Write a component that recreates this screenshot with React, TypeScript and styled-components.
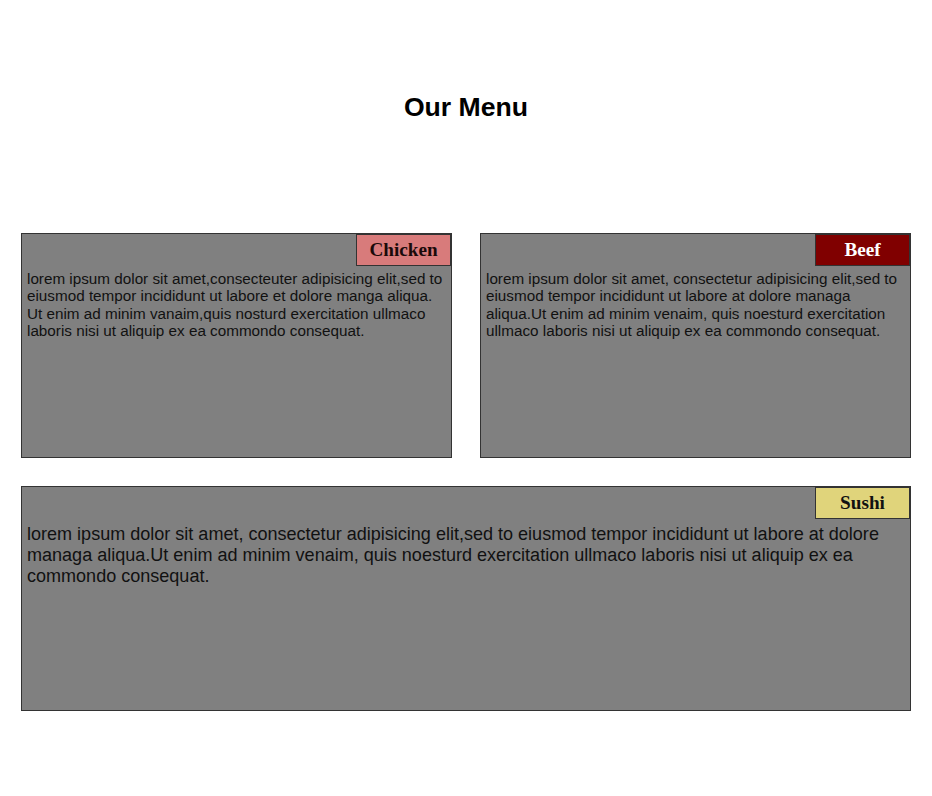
import React from "react";
import styled, { createGlobalStyle } from "styled-components";

const GlobalStyle = createGlobalStyle`
  html, body {
    margin: 0;
    padding: 0;
    background: #ffffff;
  }
  body {
    font-family: "Liberation Sans", Arial, sans-serif;
    color: #000;
  }
  * { box-sizing: border-box; }
`;

const Page = styled.main`
  padding: 92px 21px 0 21px;
  width: 932px;
`;

const Title = styled.h1`
  margin: 0;
  text-align: center;
  font-family: "Liberation Sans", Arial, sans-serif;
  font-weight: bold;
  font-size: 26.6px;
  line-height: 31px;
`;

const Grid = styled.section`
  margin-top: 110px;
  display: grid;
  grid-template-columns: 431px 431px;
  column-gap: 28px;
  row-gap: 28px;
`;

const Card = styled.article<{ $wide?: boolean }>`
  grid-column: ${(p) => (p.$wide ? "1 / span 2" : "auto")};
  height: 225px;
  background: #808080;
  border: 1px solid #333333;
  display: flex;
  flex-direction: column;
`;

const Head = styled.div`
  display: flex;
  justify-content: flex-end;
`;

const Label = styled.div<{ $bg: string; $fg: string }>`
  width: 95px;
  height: 32px;
  background: ${(p) => p.$bg};
  color: ${(p) => p.$fg};
  border: 1px solid #333333;
  display: flex;
  align-items: center;
  justify-content: center;
  font-family: "Liberation Serif", "Times New Roman", serif;
  font-weight: bold;
  font-size: 19.2px;
`;

const Text = styled.p<{ $big?: boolean }>`
  margin: 0;
  padding: ${(p) => (p.$big ? "5px 5px 0" : "4px 5px 0")};
  font-size: ${(p) => (p.$big ? "18.05px" : "15.25px")};
  line-height: ${(p) => (p.$big ? "21px" : "17.3px")};
  color: #111;
`;

const items = [
  {
    name: "Chicken",
    bg: "#d87b7b",
    fg: "#1a0a0a",
    text:
      "lorem ipsum dolor sit amet,consecteuter adipisicing elit,sed to eiusmod tempor incididunt ut labore et dolore manga aliqua. Ut enim ad minim vanaim,quis nosturd exercitation ullmaco laboris nisi ut aliquip ex ea commondo consequat.",
  },
  {
    name: "Beef",
    bg: "#800000",
    fg: "#ffffff",
    text:
      "lorem ipsum dolor sit amet, consectetur adipisicing elit,sed to eiusmod tempor incididunt ut labore at dolore managa aliqua.Ut enim ad minim venaim, quis noesturd exercitation ullmaco laboris nisi ut aliquip ex ea commondo consequat.",
  },
  {
    name: "Sushi",
    bg: "#e0d47b",
    fg: "#111111",
    wide: true,
    text:
      "lorem ipsum dolor sit amet, consectetur adipisicing elit,sed to eiusmod tempor incididunt ut labore at dolore managa aliqua.Ut enim ad minim venaim, quis noesturd exercitation ullmaco laboris nisi ut aliquip ex ea commondo consequat.",
  },
];

export default function App() {
  return (
    <>
      <GlobalStyle />
      <Page>
        <Title>Our Menu</Title>
        <Grid>
          {items.map((it) => (
            <Card key={it.name} $wide={it.wide}>
              <Head>
                <Label $bg={it.bg} $fg={it.fg}>
                  {it.name}
                </Label>
              </Head>
              <Text $big={it.wide}>{it.text}</Text>
            </Card>
          ))}
        </Grid>
      </Page>
    </>
  );
}
